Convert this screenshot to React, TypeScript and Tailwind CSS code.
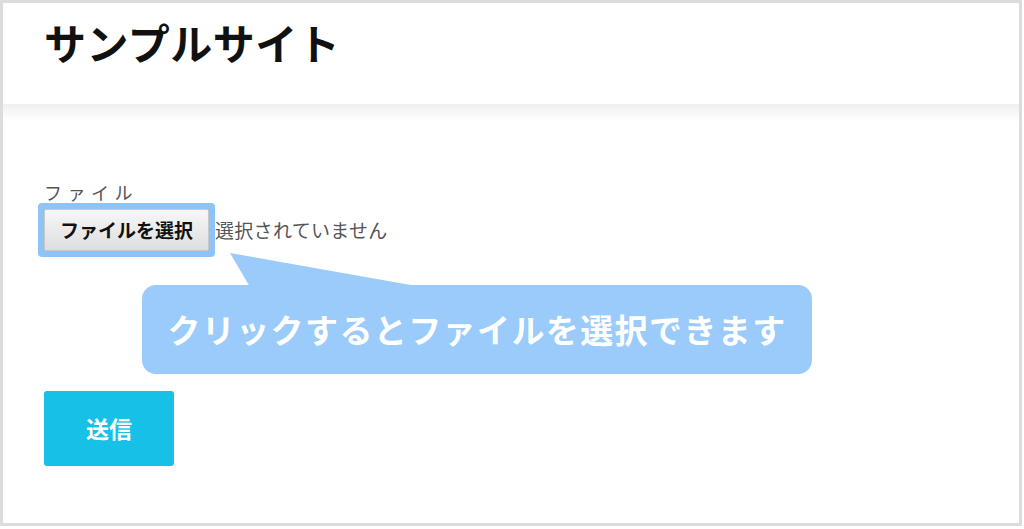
const FileField = () => {
  return (
    <div>
      <div className="text-[18px] leading-[22px] tracking-[5.5px] text-[#555]">ファイル</div>
      <div className="mt-[6px] flex items-center gap-[6px]">
        <div className="relative">
          <div className="absolute -inset-[6px] rounded-[4px] bg-[#8ec4f5]" />
          <button className="relative flex h-[42px] w-[165px] items-center justify-center rounded-[2px] border border-[#c8c8c8] bg-gradient-to-b from-[#f7f7f7] to-[#dedede] text-[19px] font-bold text-[#111]">
            ファイルを選択
          </button>
        </div>
        <span className="text-[19px] tracking-[0.3px] text-[#555]">選択されていません</span>
      </div>
    </div>
  );
};

const Callout = () => {
  return (
    <div className="relative ml-[98px] mt-[34px] flex h-[89px] w-[670px] items-center justify-center rounded-[14px] bg-[#9acbfa]">
      <svg className="absolute left-[88px] top-[-32px]" width="192" height="34" viewBox="0 0 192 34">
        <polygon points="0,0 20,34 192,34" fill="#9acbfa" />
      </svg>
      <p className="relative text-[33px] font-bold tracking-[1.4px] text-white">
        クリックするとファイルを選択できます
      </p>
    </div>
  );
};

const App = () => {
  return (
    <div className="h-[526px] w-[1022px] border-[3px] border-[#dcdcdc] bg-white font-['Noto_Sans_CJK_JP',sans-serif]">
      <header className="h-[101px] pl-[41px] pt-[14px]">
        <h1 className="text-[42px] font-bold leading-[50px] tracking-[0.5px] text-[#111]">サンプルサイト</h1>
      </header>
      <div className="h-[18px] bg-gradient-to-b from-[#f0f0f0] to-white" />
      <main className="pl-[41px] pt-[59px]">
        <FileField />
        <Callout />
        <button className="mt-[17px] flex h-[75px] w-[130px] items-center justify-center rounded-[3px] bg-[#17c0e7] text-[23px] font-bold text-white">
          送信
        </button>
      </main>
    </div>
  );
};

export default App;
